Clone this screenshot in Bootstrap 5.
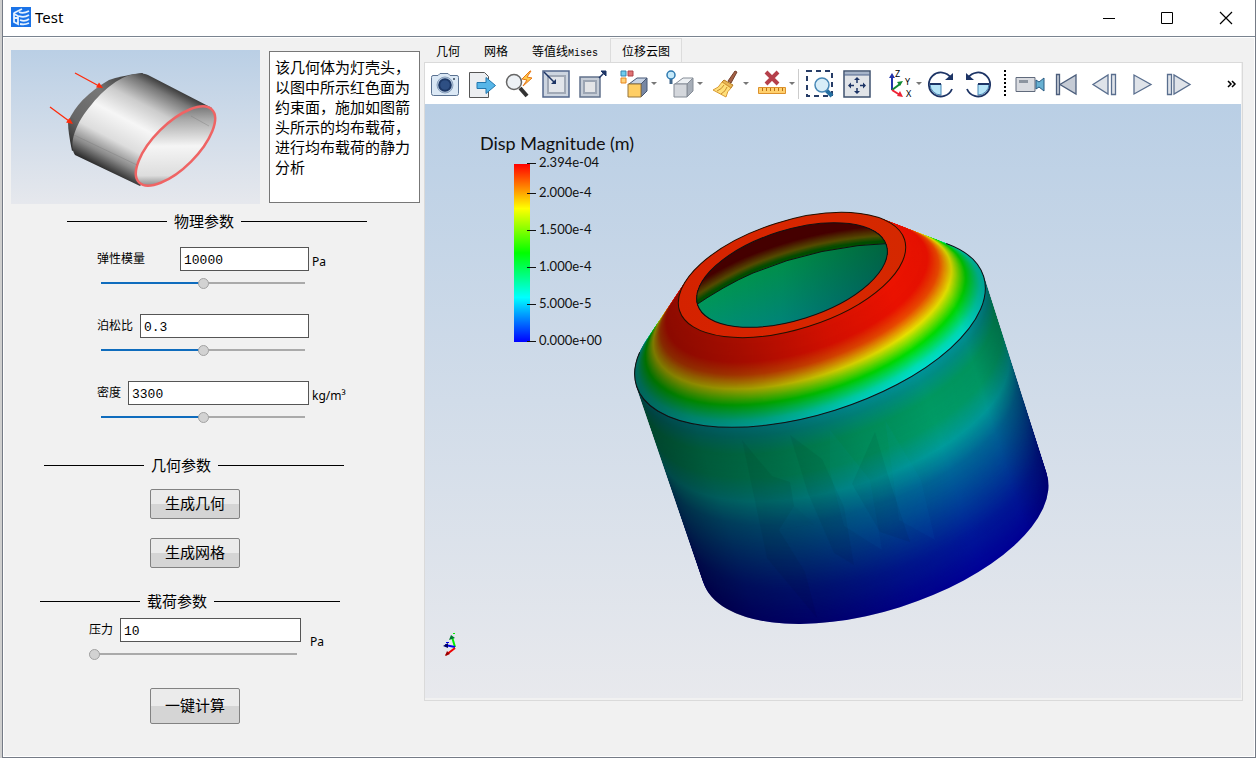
<!DOCTYPE html>
<html lang="zh-CN">
<head>
<meta charset="utf-8">
<meta name="viewport" content="width=device-width, initial-scale=1">
<title>Test</title>
<link href="https://cdn.jsdelivr.net/npm/bootstrap@5.3.0/dist/css/bootstrap.min.css" rel="stylesheet">
<script src="https://cdn.jsdelivr.net/npm/bootstrap@5.3.0/dist/js/bootstrap.bundle.min.js"></script>
<style>
  body{background:#cfcfcf;color:#000;font:12px/16px "Noto Sans","Noto Sans CJK SC",sans-serif;padding-left:2px;overflow:hidden}
  .app-window{background:#f1f1f1;border:1px solid #757b86;border-top:0;border-bottom-width:2px}
  .title-bar{height:37px;background:#fff;border-bottom:1px solid #7a8490;padding-bottom:2px}
  .title-bar h1{font-size:15px;line-height:20px;font-weight:400}
  .win-btn{width:58px;height:34px;border:0;background:none;padding:0}
  .app-body{border:1px solid #fff}
  .side-panel{flex:0 0 420px;padding:12px 0 0 7px}
  .intro{gap:9px}
  .intro-pic{width:249px;height:154px}
  .intro-text{width:151px;height:152px;margin-top:1px;border:1px solid #777;resize:none;padding:5px;font:15px/20px "Noto Sans CJK SC",sans-serif;background:#fff;color:#000;overflow:hidden}
  .sect{height:34px;font:15px/20px "Noto Sans CJK SC",sans-serif;gap:7px;margin:0}
  .sect::before,.sect::after{content:"";height:1px;background:#000;width:100px}
  .sect::after{width:126px}
  .sect-a{padding-left:56px;margin-bottom:9px}.sect-b{padding-left:33px}.sect-c{padding-left:29px}
  .param{margin-left:86px;padding-bottom:25px}
  .param-load{margin-left:78px;padding-bottom:28px}
  .field-row{height:24px}
  .field{width:212px;gap:7px}
  .field label{line-height:24px;white-space:nowrap}
  .field-wide label{margin-right:28px}
  .field input{height:24px;min-width:0;border:1px solid #555;border-radius:0;padding:2px 3px 0;background:#fff;color:#000;font:13px/16px "Liberation Mono",monospace}
  .unit{margin-left:3px;padding-top:7px}
  .unit-low{margin-left:9px;padding-top:16px}
  .slide{-webkit-appearance:none;appearance:none;display:block;width:204px;height:12px;margin:6px 0 0 4px;background:none;--fill:#0f6cbd}
  .slide-min{--fill:#aaa;width:208px;margin-left:0}
  .slide::-webkit-slider-runnable-track{height:2px;background:linear-gradient(90deg,var(--fill) 50%,#aaa 50%)}
  .slide::-webkit-slider-thumb{-webkit-appearance:none;width:11px;height:11px;margin-top:-4px;border-radius:50%;background:#d2d2d2;border:1px solid #a2a2a2}
  .act{width:90px;height:30px;margin-left:139px;padding:0 0 2px;display:block;border:1px solid #828282;border-radius:2px;background:linear-gradient(#ebebeb 50%,#d5d5d5 50%);font:15px/20px "Noto Sans CJK SC",sans-serif;color:#000}
  .act-first{margin-top:7px;margin-bottom:19px}
  .act-tall{height:36px}
  .view-col{padding:0 11px 55px 0;min-width:0}
  .tabs{border:0;height:24px}
  .tabs .nav-link{border:1px solid transparent;border-radius:0;padding:4px 11px 3px;color:#000;font:12px/16px "Noto Sans CJK SC",sans-serif;white-space:nowrap}
  .tabs .nav-link.active{background:#f3f3f3;color:#000;border-color:#dcdcdc #dcdcdc transparent}
  .tabs small{font:10px/16px "Liberation Mono",monospace}
  .pane{border:1px solid #dadada;padding:0 1px 2px 0}
  .tools{height:41px;background:#fff;padding:0 4px 0 6px;gap:9px}
  .tool{border:0;background:none;padding:0;height:28px;min-width:28px;flex:none;display:flex;align-items:center}
  .tool.narrow{min-width:0}
  .tool.near{margin-left:-4px}
  .tool.drop::after{content:"";border:3px solid transparent;border-top-color:#777;border-bottom:0;margin-left:3px}
  .vline{width:1px;height:30px;background:#ccc;margin:0 -2px 0 -6px}
  .dots{width:2px;height:28px;margin-left:3px;background:repeating-linear-gradient(#000 0 2px,transparent 2px 4px)}
  .scene{background:linear-gradient(#bacfe5,#e8e9ed);min-height:0}
  .scene text{font-family:Lato,sans-serif;fill:#111}
</style>
</head>
<body>
<div class="app-window d-flex flex-column vh-100">
  <header class="title-bar d-flex align-items-center flex-shrink-0 ps-2">
    <svg class="me-1" width="20" height="20" viewBox="0 0 20 20"><path fill="#1a73e8" d="M0 0h20v20H0z"/><path d="M3 6l6-3 2-1M3 7v8l4 2V9zM8 5q4 2 10-1M8 9q5 2 10-1M9 13q5 2 9-1M9 17q5 1 9-1M3 11h4" fill="none" stroke="#e6f2ff" stroke-width="1.800"/></svg>
    <h1 class="mb-0 flex-grow-1">Test</h1>
    <button class="win-btn" aria-label="最小化"><svg width="14" height="14"><path d="M0 7.500h12" stroke="#000"/></svg></button>
    <button class="win-btn" aria-label="最大化"><svg width="14" height="14"><path d="M.5 1.500h11v11H.5z" fill="none" stroke="#000"/></svg></button>
    <button class="win-btn" aria-label="关闭"><svg width="14" height="14"><path d="M1 1l12 12M13 1L1 13" stroke="#000" stroke-width="1.200"/></svg></button>
  </header>

  <div class="app-body d-flex flex-grow-1">
    <aside class="side-panel">
      <div class="intro d-flex">
        <svg class="intro-pic flex-shrink-0" viewBox="11 50 249 154" role="img" aria-label="几何体示意图">
          <defs>
            <linearGradient id="sky" x2="0" y2="1"><stop stop-color="#bacfe5"/><stop offset="1" stop-color="#e6e8ed"/></linearGradient>
            <linearGradient id="metal" gradientUnits="userSpaceOnUse" x1="167" y1="83" x2="117" y2="178"><stop stop-color="#333"/><stop offset=".1" stop-color="#777"/><stop offset=".28" stop-color="#ccc"/><stop offset=".48" stop-color="#f6f6f6"/><stop offset=".7" stop-color="#ddd"/><stop offset=".86" stop-color="#888"/><stop offset="1" stop-color="#222"/></linearGradient>
            <linearGradient id="hole" gradientUnits="userSpaceOnUse" x1="214" y1="110" x2="140" y2="185"><stop stop-color="#444"/><stop offset=".25" stop-color="#aaa"/><stop offset=".5" stop-color="#f5f5f5"/><stop offset=".78" stop-color="#ddd"/><stop offset="1" stop-color="#222"/></linearGradient>
            <linearGradient id="cap" x1="1" x2="0" y2="1"><stop stop-color="#222"/><stop offset=".4" stop-color="#777"/><stop offset=".75" stop-color="#666"/><stop offset="1" stop-color="#222"/></linearGradient>
          </defs>
          <path fill="url(#sky)" d="M11 50h249v154H11z"/>
          <path fill="url(#cap)" d="M143 73Q120 76 109 80Q78 98 68 122Q68 132 72 151L110 130Z"/>
          <path fill="url(#metal)" d="M148 75C132 69 110 82 92 104C76 122 68 144 75 155L140 186L212 108Z"/>
          <ellipse cx="175.500" cy="146" rx="51.500" ry="22" transform="rotate(-45 175.500 146)" fill="url(#hole)" stroke="#ef6464" stroke-width="2.500"/>
          <path d="M74 135L137 165M191 116L209 126" stroke="#777" stroke-width=".5" opacity=".7"/>
          <g stroke="#ff2b0b" stroke-width="1.300" fill="#ff2b0b"><path d="M75 73L99 86M50 107L69 121"/><path stroke="none" d="M103 88l-7-.5 3-5zM73 124l-7-1.500 3.500-4.500z"/></g>
        </svg>
        <textarea class="intro-text" aria-label="说明" readonly>该几何体为灯壳头，以图中所示红色面为约束面，施加如图箭头所示的均布载荷，进行均布载荷的静力分析</textarea>
      </div>

      <h2 class="sect sect-a d-flex align-items-center">物理参数</h2>
      <div class="param">
        <div class="field-row d-flex">
          <div class="field field-wide d-flex"><label for="young">弹性模量</label><input id="young" class="flex-grow-1" type="text" value="10000"></div>
          <span class="unit">Pa</span>
        </div>
        <input class="slide" type="range" value="50" aria-label="弹性模量滑块">
      </div>
      <div class="param">
        <div class="field-row d-flex">
          <div class="field d-flex"><label for="poisson">泊松比</label><input id="poisson" class="flex-grow-1" type="text" value="0.3"></div>
        </div>
        <input class="slide" type="range" value="50" aria-label="泊松比滑块">
      </div>
      <div class="param">
        <div class="field-row d-flex">
          <div class="field d-flex"><label for="density">密度</label><input id="density" class="flex-grow-1" type="text" value="3300"></div>
          <span class="unit">kg/m³</span>
        </div>
        <input class="slide" type="range" value="50" aria-label="密度滑块">
      </div>

      <h2 class="sect sect-b d-flex align-items-center">几何参数</h2>
      <button class="act act-first">生成几何</button>
      <button class="act mb-3">生成网格</button>

      <h2 class="sect sect-c d-flex align-items-center">载荷参数</h2>
      <div class="param-load">
        <div class="field-row d-flex">
          <div class="field d-flex"><label for="load">压力</label><input id="load" class="flex-grow-1" type="text" value="10"></div>
          <span class="unit-low">Pa</span>
        </div>
        <input class="slide slide-min" type="range" value="0" aria-label="压力滑块">
      </div>
      <button class="act act-tall">一键计算</button>
    </aside>

    <main class="view-col d-flex flex-column flex-grow-1">
      <ul class="nav nav-tabs tabs flex-nowrap" role="tablist">
        <li class="nav-item"><button class="nav-link" role="tab">几何</button></li>
        <li class="nav-item"><button class="nav-link" role="tab">网格</button></li>
        <li class="nav-item"><button class="nav-link" role="tab">等值线<small>Mises</small></button></li>
        <li class="nav-item"><button class="nav-link active" role="tab" aria-selected="true">位移云图</button></li>
      </ul>
      <section class="pane d-flex flex-column flex-grow-1">
        <div class="tools d-flex align-items-center flex-shrink-0 overflow-hidden" role="toolbar" aria-label="视图工具">
          <button class="tool" aria-label="截图"><svg width="28" height="28" viewBox="0 0 28 28"><path d="M2 5.500h5l2-2h8l2 2h7q1.500 0 1.500 2v16q0 2-2 2H2.500q-2 0-2-2v-16q0-2 1.500-2z" fill="#dbe8f5" stroke="#5b7291"/><circle cx="14" cy="15" r="8" fill="#b8cadf" stroke="#8aa1bd"/><circle cx="14" cy="15" r="5.800" fill="#2e4f83" stroke="#1c3765" stroke-width="2"/><circle cx="23" cy="9" r="1" fill="#345"/></svg></button>
          <button class="tool" aria-label="导出"><svg width="28" height="28" viewBox="0 0 28 28"><path d="M1.500 2.500h15l4 4v21h-19z" fill="#eceef1" stroke="#555"/><path d="M9 12.500h9v-5l9.500 8-9.500 8v-5H9z" fill="#57b6e8" stroke="#2277ae"/></svg></button>
          <button class="tool" aria-label="快速缩放"><svg width="28" height="28" viewBox="0 0 28 28"><path d="M15 18l7 8" stroke="#333" stroke-width="4"/><circle cx="9" cy="12" r="7.500" fill="#edf1f5" stroke="#666" stroke-width="1.500"/><path d="M25 1l-8 8 5 1-4 6 9-8-5-1 4-6z" fill="#ffc84a" stroke="#e77817"/></svg></button>
          <button class="tool" aria-label="缩小到框"><svg width="28" height="28" viewBox="0 0 28 28"><path d="M1 1h26v26H1z" fill="#cdd5e0" stroke="#53678c" stroke-width="1.500"/><path d="M6 6h17v17H6z" fill="#e2e5ea" stroke="#a1a9b6" stroke-width="2"/><path d="M2 2l10 10" stroke="#1d3465" stroke-width="1.500"/><path d="M14 14V9l-5 5z" fill="#1d3465"/></svg></button>
          <button class="tool" aria-label="放大到框"><svg width="28" height="28" viewBox="0 0 28 28"><path d="M1 7h20v20H1z" fill="#c6cdd7" stroke="#62718c" stroke-width="1.500"/><path d="M5 11h12v12H5z" fill="#e4e5e7" stroke="#9ca5b3" stroke-width="2"/><path d="M20 8l6-6" stroke="#1d3465" stroke-width="1.500"/><path d="M22 1h5v5z" fill="#1d3465" stroke="#1d3465"/></svg></button>
          <button class="tool drop ms-1" aria-label="着色"><svg width="28" height="28" viewBox="0 0 28 28"><path d="M1 1h5v5H1z" fill="#70cdef" stroke="#3484b1"/><path d="M8 1h5v5H8z" fill="#df7474" stroke="#b14149"/><path d="M1 8h5v5H1z" fill="#ffd27b" stroke="#e78620"/><path d="M9 14l8-6h10l-6 6z" fill="#c7d3e5" stroke="#465774"/><path d="M21 14l6-6v13l-6 6z" fill="#7787a3" stroke="#465774"/><path d="M8 14h13v13H8z" fill="#ffce65" stroke="#96743a"/></svg></button>
          <button class="tool drop" aria-label="显示模式"><svg width="28" height="28" viewBox="0 0 28 28"><path d="M9 14l8-6h10l-6 6z" fill="#edf0f3" stroke="#858c96"/><path d="M21 14l6-6v13l-6 6z" fill="#a6adb7" stroke="#858c96"/><path d="M8 14h13v13H8z" fill="#d4d7dc" stroke="#858c96"/><path d="M5 9v5" stroke="#42668a" stroke-width="3"/><circle cx="5" cy="5" r="4" fill="#c6eafa" stroke="#2e79b0" stroke-width="1.500"/></svg></button>
          <button class="tool drop" aria-label="清除"><svg width="28" height="28" viewBox="0 0 28 28"><path d="M16 11l7-10 2 1-6 11z" fill="#a46145" stroke="#74402c"/><path d="M12 10l9 5-2 3-9-6z" fill="#e8b557" stroke="#b67c21"/><path d="M10 12l9 6q-4 3-5 9L1 20q6-2 9-8z" fill="#ffdf79" stroke="#d99a33"/><path d="M5 21q5-2 7-6M9 24q5-3 6-7" fill="none" stroke="#c88c2e"/></svg></button>
          <button class="tool drop" aria-label="删除标尺"><svg width="28" height="28" viewBox="0 0 28 28"><path d="M8 2l12 12M20 2L8 14" stroke="#b5404b" stroke-width="4"/><path d="M.5 17.500h27v6H.5z" fill="#ffd06d" stroke="#dc912c"/><path d="M4.500 18v3M8.500 18v3M12.500 18v3M16.500 18v3M20.500 18v3M24.500 18v3" stroke="#b87014"/></svg></button>
          <span class="vline"></span>
          <button class="tool" aria-label="框选缩放"><svg width="28" height="28" viewBox="0 0 28 28"><path d="M1 1h25v25H1z" fill="none" stroke="#273d67" stroke-width="2" stroke-dasharray="5 4"/><path d="M20 20l6 6" stroke="#2670a2" stroke-width="4"/><circle cx="16" cy="15" r="7" fill="#d8edf8" stroke="#4787b6" stroke-width="1.500"/></svg></button>
          <button class="tool" aria-label="适应窗口"><svg width="28" height="28" viewBox="0 0 28 28"><path d="M1 1h26v26H1z" fill="#e1e4e8" stroke="#3f526f" stroke-width="1.500"/><path d="M2 2h24v3H2z" fill="#a6b4c9"/><path d="M1 5h26" stroke="#53678c"/><path d="M14 9v4M14 18v4M7 15.500h4M17 15.500h4" stroke="#1d3465" stroke-width="1.500"/><path d="M14 7l3 3h-6zM14 24l3-3h-6zM5 15.500l3-3v6zM23 15.500l-3-3v6z" fill="#1d3465"/></svg></button>
          <button class="tool narrow drop ms-2" aria-label="坐标轴"><svg width="25" height="32" viewBox="0 -2 25 32"><path d="M4 20V6" stroke="#23a" stroke-width="2"/><path d="M4 3l3 5H1z" fill="#23a"/><path d="M4 20l8-6" stroke="#183" stroke-width="2"/><path d="M15 11l-6 1 3 4z" fill="#183"/><path d="M4 20l8 5" stroke="#e23" stroke-width="2"/><path d="M15 27l-6-1 3-5z" fill="#e23"/><text font-family="Noto Sans" font-size="9"><tspan x="7" y="7">Z</tspan><tspan x="17" y="15">Y</tspan><tspan x="18" y="27">X</tspan></text></svg></button>
          <button class="tool narrow near" aria-label="顺时针旋转"><svg width="28" height="28" viewBox="0 0 28 28"><path d="M14 14v11A11 11 0 0 1 3 14z" fill="#b6e4f7" stroke="#4787b6"/><path d="M24 8A12 12 0 1 0 25 19M3 14h11" fill="none" stroke="#1d3465" stroke-width="1.800"/><path d="M26 3v7h-8z" fill="#1d3465"/></svg></button>
          <button class="tool narrow" aria-label="逆时针旋转"><svg width="28" height="28" viewBox="0 0 28 28"><path d="M14 14v11a11 11 0 0 0 11-11z" fill="#b6e4f7" stroke="#4787b6"/><path d="M4 8a12 12 0 1 1-1 11M25 14H14" fill="none" stroke="#1d3465" stroke-width="1.800"/><path d="M2 3v7h8z" fill="#1d3465"/></svg></button>
          <span class="dots"></span>
          <button class="tool" aria-label="录像"><svg width="30" height="28" viewBox="0 0 30 28"><path d="M1 7.500h19v14H1z" fill="#d9dbe0" stroke="#606a7c"/><path d="M4 10h9v3H4z" fill="#8c949f"/><path d="M21 10l3 2 5-4v13l-5-4-3 2z" fill="#68b1d2" stroke="#285b82"/></svg></button>
          <button class="tool" aria-label="第一帧"><svg width="28" height="28" viewBox="0 0 28 28"><path d="M2.500 4.500h3v20h-3zM22 5v19L6 14.500z" fill="#c5cbd5" stroke="#4c5e7c" stroke-width="1.300"/></svg></button>
          <button class="tool" aria-label="上一帧"><svg width="28" height="28" viewBox="0 0 28 28"><path d="M20.500 4.500h4v20h-4zM17 5v19L2 14.500z" fill="#dfe3e9" stroke="#596e8e" stroke-width="1.300"/></svg></button>
          <button class="tool" aria-label="播放"><svg width="28" height="28" viewBox="0 0 28 28"><path d="M6 5v19l17-9.500z" fill="#dfe3e9" stroke="#596e8e" stroke-width="1.300"/></svg></button>
          <button class="tool" aria-label="下一帧"><svg width="28" height="28" viewBox="0 0 28 28"><path d="M2.500 4.500h4v20h-4zM9 5v19l16-9.500z" fill="#dfe3e9" stroke="#596e8e" stroke-width="1.300"/></svg></button>
          <button class="tool narrow ms-auto" aria-label="更多"><svg width="10" height="8" viewBox="0 0 10 8"><path d="M1 1l3 3-3 3M5 1l3 3-3 3" fill="none" stroke="#000" stroke-width="1.500"/></svg></button>
        </div>

        <svg class="scene w-100 flex-grow-1" viewBox="425 104 816 594" preserveAspectRatio="xMinYMin meet" role="img" aria-label="位移云图">
          <defs>
            <linearGradient id="bar" x2="0" y2="1"><stop stop-color="#f00"/><stop offset=".25" stop-color="#ff0"/><stop offset=".5" stop-color="#0f0"/><stop offset=".75" stop-color="#0ff"/><stop offset="1" stop-color="#00f"/></linearGradient>
            <linearGradient id="shade" gradientUnits="userSpaceOnUse" x1="637" y1="386" x2="983" y2="276"><stop stop-opacity=".55"/><stop offset=".12" stop-opacity=".42"/><stop offset=".3" stop-opacity=".31"/><stop offset=".55" stop-opacity=".12"/><stop offset=".75" stop-opacity=".02"/><stop offset=".9" stop-opacity=".05"/><stop offset="1" stop-opacity=".28"/></linearGradient>
            <linearGradient id="deep" gradientUnits="userSpaceOnUse" x1="730" y1="270" x2="755" y2="345"><stop stop-color="#009c48"/><stop offset="1" stop-color="#008c8c"/></linearGradient>
            <linearGradient id="dim" x1="0" x2="1"><stop stop-opacity="0"/><stop offset=".45" stop-opacity=".08"/><stop offset="1" stop-opacity=".35"/></linearGradient>
            <linearGradient id="ring" x2="1"><stop stop-color="#d42200"/><stop offset=".5" stop-color="#d82600"/><stop offset="1" stop-color="#d42800"/></linearGradient>
            <clipPath id="mouth"><ellipse cx="792" cy="275" rx="99" ry="45" transform="rotate(-17.500 792 275)"/></clipPath>
            <clipPath id="bodyShape"><ellipse cx="810" cy="331" rx="182" ry="83" transform="rotate(-17.500 810 331)"/><ellipse cx="875" cy="528" rx="180" ry="83" transform="rotate(-17.500 875 528)"/><path d="M636 386L984 276L1047 474L703 582Z"/></clipPath>
            <clipPath id="coneShape"><ellipse rx="118" ry="54" transform="translate(792 275) rotate(-17.500)"/><ellipse cy="59" rx="182" ry="83" transform="translate(792 275) rotate(-17.500)"/><path d="M-102-27H102L158 18H-158Z" transform="translate(792 275) rotate(-17.500)"/></clipPath>
          </defs>
          <text x="480" y="150" font-size="18">Disp Magnitude (m)</text>
          <path fill="url(#bar)" d="M514 164h16v178h-16z"/>
          <path d="M527 163.500h9M527 193.500h9M527 230.500h9M527 267.500h9M527 304.500h9M527 341.500h9" stroke="#111"/>
          <g font-size="13"><text x="539" y="167">2.394e-04</text><text x="539" y="197">2.000e-4</text><text x="539" y="234">1.500e-4</text><text x="539" y="271">1.000e-4</text><text x="539" y="308">5.000e-5</text><text x="539" y="345">0.000e+00</text></g>

          <g id="body"></g>
          <path d="M620 200h450v440H620z" fill="url(#shade)" clip-path="url(#bodyShape)"/>
          <g fill="#000" opacity=".05">
            <path d="M742 440l30 36 18 6 4 24 20 18-35 6 26 42 12 46-50-60z"/>
            <path d="M790 435l32 24 22 48 10 58-20-12-26-60z"/>
            <path d="M875 432l15 50 20 60-30-10-28-48z"/>
          </g>
          <g fill="#0af" opacity=".04"><path d="M830 430l40 50 12 70-38-24-14-54zM885 420l36 60 14 60-36-20zM794 506l20 18-35 6z"/></g>
          <g id="cone"></g>
          <path d="M600 190h410v260H600z" fill="url(#shade)" clip-path="url(#coneShape)"/>
          <ellipse cx="810" cy="331" rx="182" ry="83" transform="rotate(-17.500 810 331)" fill="none" stroke="#111" pathLength="100" stroke-dasharray="54 40 6"/>
          <ellipse cx="792" cy="275" rx="118" ry="54" transform="rotate(-17.500 792 275)" fill="url(#ring)" stroke="#221100"/>
          <g clip-path="url(#mouth)">
            <path d="M680 200h230v160H680z" fill="#450000"/>
            <g id="band" fill="none"></g>
            <path d="M690 309Q725 285 753 273Q820 245 895 243V360H690Z" fill="url(#deep)"/>
            <path d="M690 309Q725 285 753 273Q820 245 895 243V360H690Z" fill="url(#dim)" stroke="#111"/>
          </g>
          <ellipse cx="792" cy="275" rx="99" ry="45" transform="rotate(-17.500 792 275)" fill="none" stroke="#111"/>

          <g stroke-width="2" fill="none"><path d="M455 647l-3-10" stroke="#0e0"/><path d="M455 647l-10-2" stroke="#00e"/><path d="M455 648l-9 7" stroke="#e00"/></g>
          <path d="M449 640l2-5 4 3z" fill="#073"/><path d="M443 646l5-3v5z" fill="#006"/><path d="M445 656l2-5 3 3z" fill="#900"/><path d="M453 633.500h2" stroke="#0e0"/><path d="M446 642.500h3" stroke="#00e"/>
        </svg>
      </section>
    </main>
  </div>
</div>
<script>
  const NS = 'http://www.w3.org/2000/svg';
  // Linear interpolation in a list of [position, r, g, b] stops.
  function colour(stops, t) {
    let i = 1;
    while (i < stops.length - 1 && t > stops[i][0]) i++;
    const a = stops[i - 1], b = stops[i];
    const k = Math.min(1, Math.max(0, (t - a[0]) / (b[0] - a[0])));
    return 'rgb(' + [1, 2, 3].map(n => Math.round(a[n] + (b[n] - a[n]) * k)).join() + ')';
  }
  function add(parent, tag, attrs) {
    const el = document.createElementNS(NS, tag);
    for (const k in attrs) el.setAttribute(k, attrs[k]);
    parent.appendChild(el);
  }
  // A surface of revolution, drawn as stacked discs from the far section to the near one.
  function stack(id, from, to, steps, stops) {
    const g = document.getElementById(id);
    for (let i = steps; i >= 0; i--) {
      const t = i / steps, v = from.map((p, n) => p + (to[n] - p) * t);
      add(g, 'ellipse', { cx: v[0], cy: v[1], rx: v[2], ry: v[3], transform: `rotate(-17.5 ${v[0]} ${v[1]})`, fill: colour(stops, t) });
    }
  }
  const shoulder = [810, 331, 182, 83], base = [875, 528, 180, 83], rim = [792, 275, 118, 54];
  stack('body', shoulder, base, 150, [[0,0,150,160],[.05,0,145,135],[.14,0,155,98],[.26,0,158,105],[.38,0,158,158],[.5,0,105,155],[.65,0,68,155],[.82,0,25,155],[1,0,0,155]]);
  stack('cone', rim, shoulder, 90, [[0,240,20,0],[.28,238,18,0],[.42,238,75,0],[.58,235,230,0],[.76,0,225,0],[.93,0,225,180],[1,0,225,215]]);
  for (let w = 40; w > 0; w -= 2)
    add(document.getElementById('band'), 'path', { d: 'M690 309Q725 285 753 273Q820 245 895 243', 'stroke-width': w, stroke: colour([[0,0,80,0],[.15,0,76,0],[.42,84,76,0],[.9,69,0,0]], w / 40) });
</script>
</body>
</html>
